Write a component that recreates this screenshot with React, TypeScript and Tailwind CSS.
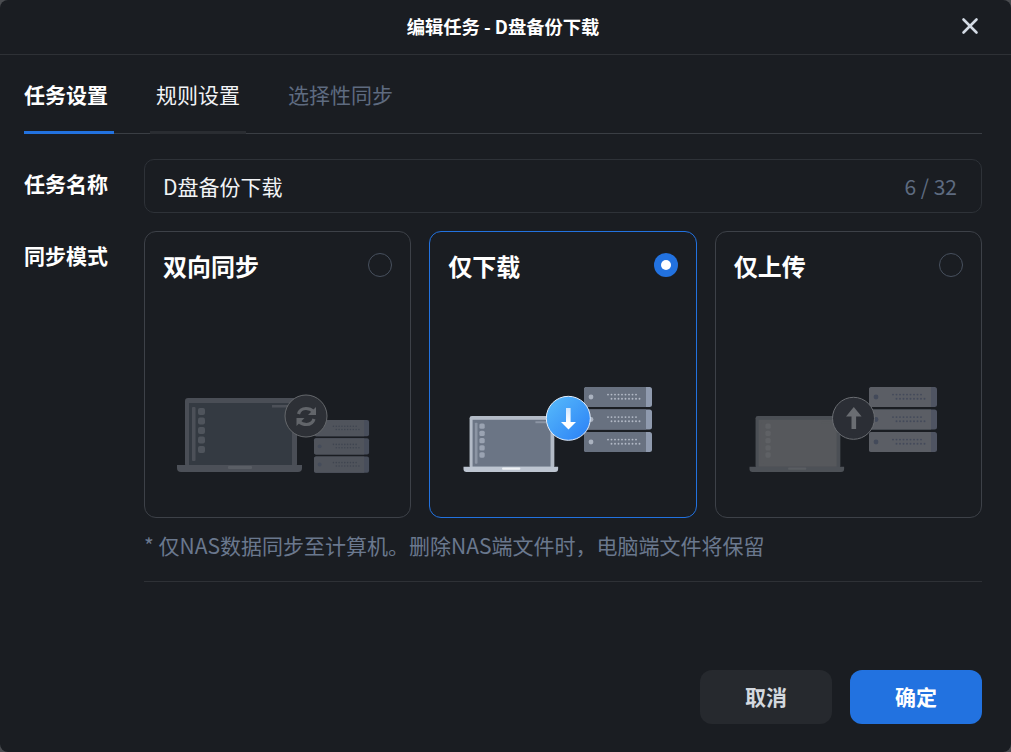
import { X } from "lucide-react";

const cjk = "font-['Noto_Sans_CJK_SC','Noto_Sans',sans-serif]";

type LaptopColors = { outer: string; base: string; screen: string; bar: string; dot: string; line: string; notch: string };
type ServerColors = { body: string; side: string; dot: string; led: string };

function Laptop({ x, y, scale, c }: { x: number; y: number; scale: number; c: LaptopColors }) {
  return (
    <g transform={`translate(${x} ${y}) scale(${scale})`}>
      <rect x="8" y="0" width="112" height="69" rx="3" fill={c.outer} />
      <rect x="12" y="5" width="103" height="62" fill={c.screen} />
      <rect x="15" y="9" width="3.5" height="54" rx="1" fill={c.bar} />
      {[10, 19.5, 29, 38.5, 48].map((d) => (
        <rect key={d} x="21" y={d} width="7" height="7" rx="2" fill={c.dot} />
      ))}
      <rect x="95" y="7" width="16" height="2.5" fill={c.line} />
      <path d="M0 67h125v3a4 4 0 0 1-4 4H4a4 4 0 0 1-4-4z" fill={c.base} />
      <rect x="51" y="68" width="24" height="3" rx="1" fill={c.notch} />
    </g>
  );
}

function Servers({ x, y, scale, c }: { x: number; y: number; scale: number; c: ServerColors }) {
  const row1 = [0, 1, 2, 3, 4, 5, 6, 7, 8];
  return (
    <g transform={`translate(${x} ${y}) scale(${scale})`}>
      {[0, 22.5, 45].map((t) => (
        <g key={t} transform={`translate(0 ${t})`}>
          <rect x="0" y="0" width="68" height="20" rx="2.5" fill={c.side} />
          <path d="M2.5 0H62v20H2.5A2.5 2.5 0 0 1 0 17.5v-15A2.5 2.5 0 0 1 2.5 0z" fill={c.body} />
          <circle cx="7" cy="10" r="2.4" fill={c.led} />
          {row1.map((i) => (
            <circle key={i} cx={24 + i * 3.5} cy="7.6" r="0.95" fill={c.dot} />
          ))}
          {row1.map((i) => (
            <circle key={i} cx={27.5 + i * 3.5} cy="11.8" r="0.95" fill={c.dot} />
          ))}
        </g>
      ))}
    </g>
  );
}

function SyncArt() {
  return (
    <svg viewBox="145 380 265 100" className="block h-[100px] w-[265px] blur-[0.4px]">
      <Laptop x={177} y={398} scale={1} c={{ outer: "#4a4e56", base: "#4c5058", screen: "#343a42", bar: "#4c5058", dot: "#4f545c", line: "#4c5058", notch: "#5a5e65" }} />
      <Servers x={314} y={420} scale={0.81} c={{ body: "#50545c", side: "#484e5b", dot: "#3f4550", led: "#454c5a" }} />
      <circle cx="306" cy="416" r="21" fill="#2d3036" stroke="#65686c" strokeWidth="1" />
      <g fill="none" stroke="#62656a" strokeWidth="3.2">
        <path d="M298.500 414c1-3.500 4-5.500 7.500-5.500 3 0 5.500 1 7.500 3" />
        <path d="M314 419c-1 3.500-4 5.500-7.500 5.500-3 0-5.500-1-7.500-3" />
      </g>
      <path d="M316 407v8h-8z" fill="#62656a" />
      <path d="M296.500 426v-8h8z" fill="#62656a" />
    </svg>
  );
}

function DownloadArt() {
  return (
    <svg viewBox="430 380 265 100" className="block h-[100px] w-[265px] blur-[0.3px]">
      <defs>
        <linearGradient id="dlCircle" x1="0" y1="0" x2="1" y2="1">
          <stop offset="0" stopColor="#58bcfb" />
          <stop offset="1" stopColor="#2a7ff6" />
        </linearGradient>
        <linearGradient id="dlShaft" x1="0" y1="0" x2="0" y2="1">
          <stop offset="0" stopColor="#cfe6ff" />
          <stop offset="1" stopColor="#ffffff" />
        </linearGradient>
      </defs>
      <Laptop x={463.500} y={416} scale={0.757} c={{ outer: "#b3bbc7", base: "#bdc5d1", screen: "#6b7585", bar: "#8c95a4", dot: "#9aa3b2", line: "#8c95a4", notch: "#eef1f5" }} />
      <Servers x={584} y={387} scale={1} c={{ body: "#687180", side: "#8f9aae", dot: "#b3bac6", led: "#aab2bf" }} />
      <circle cx="568.300" cy="418.300" r="22" fill="url(#dlCircle)" stroke="#e4eefc" strokeWidth="1" />
      <rect x="566" y="408" width="4.600" height="14.500" fill="url(#dlShaft)" />
      <path d="M561 422h15l-7.500 7.500z" fill="#ffffff" />
    </svg>
  );
}

function UploadArt() {
  return (
    <svg viewBox="716 380 265 100" className="block h-[100px] w-[265px] blur-[0.4px]">
      <Laptop x={749.500} y={416} scale={0.757} c={{ outer: "#4b4f55", base: "#4d5157", screen: "#56585c", bar: "#56585c", dot: "#5f6165", line: "#56585c", notch: "#5a5d62" }} />
      <Servers x={869} y={387} scale={1} c={{ body: "#5b5e65", side: "#4f5462", dot: "#434a5a", led: "#434a5a" }} />
      <circle cx="853.500" cy="418.300" r="21" fill="#2b2e35" stroke="#6a6d72" strokeWidth="1" />
      <rect x="851.500" y="415" width="4.600" height="14" fill="#6a6d72" />
      <path d="M846 416.500l7.800-9.500 7.800 9.500z" fill="#6a6d72" />
    </svg>
  );
}

function ModeCard({ title, selected, children }: { title: string; selected?: boolean; children: React.ReactNode }) {
  return (
    <div className={`flex h-[287px] flex-col justify-between rounded-[12px] border ${selected ? "border-[#2272e0]" : "border-[#3d4148]"}`}>
      <div className="flex items-start justify-between pl-[18px] pr-[18px] pt-[19px]">
        <span className="text-[24px] leading-[30px] font-bold text-white">{title}</span>
        {selected ? (
          <span className="mt-[2px] flex h-[24px] w-[24px] items-center justify-center rounded-full bg-[#2272e0]">
            <span className="h-[10px] w-[10px] rounded-full bg-white" />
          </span>
        ) : (
          <span className="mt-[2px] h-[24px] w-[24px] rounded-full border border-[#47505e]" />
        )}
      </div>
      <div className="mb-[37px]">{children}</div>
    </div>
  );
}

export default function App() {
  return (
    <div className="h-[752px] w-[1011px] bg-[#4a4c50]">
      <div className={`flex h-[752px] w-[1011px] flex-col overflow-hidden rounded-[8px] bg-[#1a1d22] ${cjk}`}>
        <header className="relative flex h-[55px] shrink-0 items-center justify-center border-b border-[#2e3136] pb-[1px] pr-[5px]">
          <h1 className="text-[18.3px] font-bold text-white">编辑任务 - D盘备份下载</h1>
          <button className="absolute right-[28px] top-[13px] text-[#d3dae4]">
            <X size={26} strokeWidth={2.4} />
          </button>
        </header>

        <div className="ml-[24px] mr-[29px] flex h-[79px] shrink-0 items-end border-b border-[#3a3e44] text-[21px]">
          <div className="mr-[36px] h-[79px] w-[90px] border-b-[3px] border-[#2272e0] pt-[23px] font-bold leading-[32px] text-white -mb-px">任务设置</div>
          <div className="mr-[36px] h-[79px] w-[96px] border-b-[3px] border-[#2a2d32] px-[6px] pt-[23px] leading-[32px] text-[#f1f3f6] -mb-px">规则设置</div>
          <div className="h-[79px] px-[6px] pt-[23px] leading-[32px] text-[#5e6b80] -mb-px">选择性同步</div>
        </div>

        <div className="ml-[24px] mr-[29px] mt-[25px] flex">
          <div className="w-[120px] pt-[8px] text-[21px] leading-[32px] font-bold text-white">任务名称</div>
          <div className="flex h-[54px] flex-1 items-center justify-between rounded-[10px] border border-[#2e3238] pl-[18px] pr-[24px]">
            <span className="pt-[2px] text-[21px] text-[#f1f3f6]">D盘备份下载</span>
            <span className="pt-[2px] text-[21px] text-[#5e6b80]">6 / 32</span>
          </div>
        </div>

        <div className="ml-[24px] mr-[29px] mt-[18px] flex">
          <div className="w-[120px] pt-[8px] text-[21px] leading-[32px] font-bold text-white">同步模式</div>
          <div className="flex-1">
            <div className="grid grid-cols-3 gap-[18px]">
              <ModeCard title="双向同步"><SyncArt /></ModeCard>
              <ModeCard title="仅下载" selected><DownloadArt /></ModeCard>
              <ModeCard title="仅上传"><UploadArt /></ModeCard>
            </div>
            <p className="mt-[12px] text-[21px] leading-[30px] text-[#6a788e]">* 仅NAS数据同步至计算机。删除NAS端文件时，电脑端文件将保留</p>
            <div className="mt-[21px] border-t border-[#2e3136]" />
          </div>
        </div>

        <div className="mx-[29px] mt-[88px] flex justify-end gap-[18px] text-[21px] font-bold">
          <button className="h-[54px] w-[132px] rounded-[12px] bg-[#26292e] text-[#d3d8df]">取消</button>
          <button className="h-[54px] w-[132px] rounded-[12px] bg-[#2272e0] text-white">确定</button>
        </div>
      </div>
    </div>
  );
}
